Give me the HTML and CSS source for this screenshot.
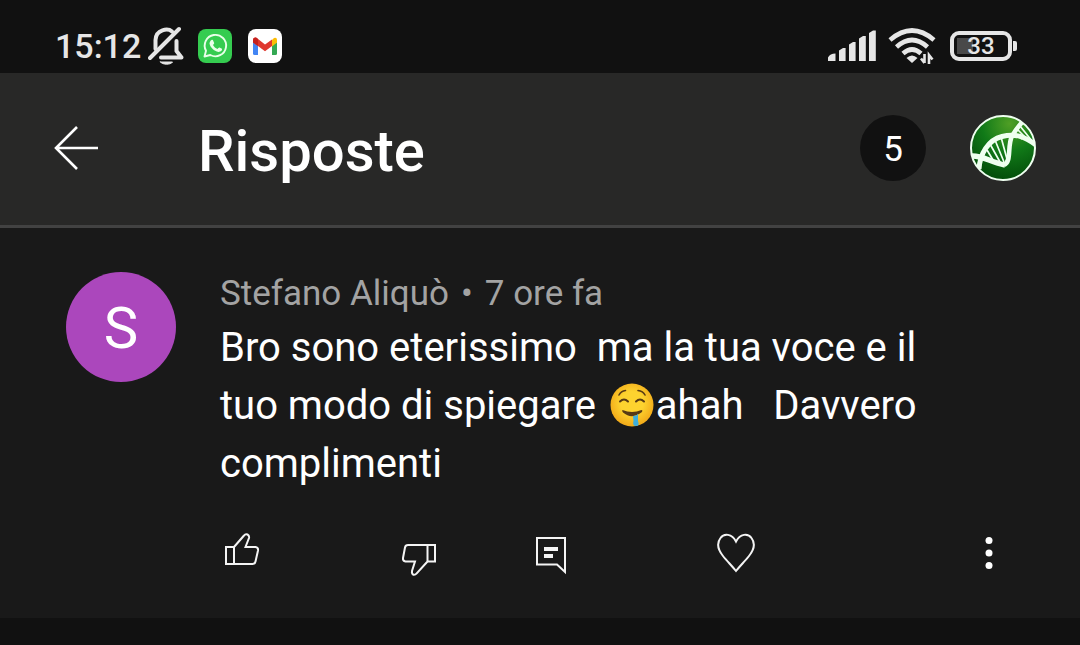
FILE: index.html
```html
<!DOCTYPE html>
<html lang="it">
<head>
  <meta charset="utf-8">
  <meta name="viewport" content="width=device-width, initial-scale=1">
  <title>Risposte</title>
  <link rel="stylesheet" href="styles.css">
</head>
<body>
  <div class="status-bar">
    <div class="status-left">
      <span class="clock">15:12</span>
      <!-- Muted bell -->
      <svg class="bell" viewBox="0 0 36 40" fill="none" stroke="#e6e6e6" stroke-width="4" stroke-linecap="round" stroke-linejoin="round">
        <path d="M24 5.500C20 2 8 3 7.500 14V23M13 31.500H33.500L28.500 25V15"/>
        <path d="M2 32L31 3"/>
        <path d="M12.500 36H24.500C23 39 14 39 12.500 36Z" fill="#e6e6e6" stroke-width="1"/>
      </svg>
      <svg class="app-icon" viewBox="0 0 34 34">
        <rect width="34" height="34" rx="8" fill="#35cc50"/>
        <path d="M6.500 27.500L8 21.700A10.700 10.700 0 1 1 12.300 26Z" fill="none" stroke="#e9ffe9" stroke-width="1.900" stroke-linejoin="round"/>
        <path d="M13.500 11C14.500 10.500 15 11 15.300 12L16.200 14C16.300 14.800 15.500 15.300 15 16C16 18 17.500 19.200 19.500 20C20.200 19.500 20.700 18.400 21.500 18.500L24 19.800C24.500 21.500 22.500 23 20.500 22.900C16 22.300 12 18 11.500 14.500C11.500 13 12.500 11.500 13.500 11Z" fill="#e9ffe9"/>
      </svg>
      <svg class="app-icon" viewBox="0 0 34 34">
        <rect width="34" height="34" rx="8" fill="#fff"/>
        <path d="M5 13L10 16.500V26H6.500Q5 26 5 24.500Z" fill="#4285f4"/>
        <path d="M24 16.500L29 13V24.500Q29 26 27.500 26H24Z" fill="#34a853"/>
        <path d="M24 11L26 9Q29 8 29 11V13.500L24 17.500Z" fill="#fbbc04"/>
        <path d="M5 13.500V11Q5 7.500 8.500 8.800L17 15.500L24 10.500V17L17 22.200L10 17Z" fill="#df382f"/>
        <path d="M5 11Q5 8 8 8.500L10 10V17L5 13.500Z" fill="#c5221f"/>
      </svg>
    </div>
    <div class="status-right">
      <svg class="signal" viewBox="0 0 48 32" fill="#e6e6e6">
        <path d="M0 31V27.500Q2 23.500 7.500 23.500V31ZM11 31V20.500L15 18H17.600V31ZM21 31V14.500L25 12H27.600V31ZM31 31V8.500L35 6H37.800V31ZM41 31V3L45 0.500H47.800V31Z"/>
      </svg>
      <svg class="wifi" viewBox="0 0 48 36" fill="none" stroke="#e6e6e6" stroke-width="4.600">
        <path d="M2 12Q24 -7 46 12M8.500 19Q24 5 39.500 19M15 25.500Q24 17.500 33 25.500"/>
        <path d="M18.500 30Q24 25 29.500 30L24 35Z" fill="#e6e6e6" stroke="none"/>
        <path d="M36.500 26V35M33 30.500L36.500 35M41 36V27L44.500 31.500" stroke-width="2.600"/>
      </svg>
      <div class="battery"><span>33</span></div>
    </div>
  </div>

  <header class="header">
    <button class="back" type="button" aria-label="Indietro">
      <svg viewBox="0 0 48 48" fill="none" stroke="#fff" stroke-width="2.600">
        <path d="M25 3L4 24L25 45M4 24H46"/>
      </svg>
    </button>
    <h1>Risposte</h1>
    <span class="count">5</span>
    <button class="channel" type="button" aria-label="Canale">
      <svg viewBox="0 0 66 66">
        <defs>
          <radialGradient id="green" cx="60%" cy="12%" r="85%">
            <stop offset="0" stop-color="#4f9f25"/>
            <stop offset="0.500" stop-color="#117a18"/>
            <stop offset="1" stop-color="#04500b"/>
          </radialGradient>
          <clipPath id="disc"><circle cx="33" cy="33" r="32"/></clipPath>
        </defs>
        <circle cx="33" cy="33" r="32" fill="url(#green)"/>
        <g clip-path="url(#disc)" fill="none" stroke="#effff0">
          <path d="M1 41C12 40 20 47 35 50" stroke-width="5.500"/>
          <path d="M9 54C10 39 18 25 32 21.500C46 18 55 22 66 30" stroke-width="5"/>
          <path d="M34 50C42 47 37 31 42 21Q46 14 54 5" stroke-width="4.500"/>
          <path d="M17 35L23 45M20 29L30 47M25 25L34 47M31 22L37 44M44 18L52 24M47 14L57 24M50 11L62 26M55 7L64 21" stroke-width="1.700"/>
        </g>
        <circle cx="33" cy="33" r="32" fill="none" stroke="#effff0" stroke-width="2"/>
      </svg>
    </button>
  </header>

  <main class="comment">
    <div class="avatar">S</div>
    <div class="content">
      <div class="meta">Stefano Aliquò<span class="dot">•</span>7 ore fa</div>
      <p class="text">Bro sono eterissimo&nbsp; ma la tua voce e il tuo modo di spiegare <svg class="emoji" viewBox="0 0 44 44" role="img" aria-label="Faccina che sbava">
          <defs>
            <radialGradient id="face" cx="50%" cy="45%" r="52%">
              <stop offset="0.500" stop-color="#fdd32f"/>
              <stop offset="1" stop-color="#f3ad1b"/>
            </radialGradient>
          </defs>
          <circle cx="22" cy="22" r="21.500" fill="url(#face)"/>
          <g fill="none" stroke="#583a14" stroke-width="2" stroke-linecap="round">
            <path d="M9 12Q11 8 15.500 7.500M28 7.500Q33 8 35 12" stroke-width="1.600"/>
            <path d="M10 18.500Q14 14.500 18 18.500M26 18.500Q30 14.500 34 18.500"/>
          </g>
          <path d="M12.500 27Q22 31 31.500 27Q33 27 32 29Q22 37 13 29.500Q11.500 27.500 12.500 27Z" fill="#583a14"/>
          <path d="M23 33Q27 33 28 30.500V38Q30 43 26 43Q22 43 23.500 38Z" fill="#3eafdc"/>
        </svg>ahah&nbsp;&nbsp; Davvero complimenti</p>
      <div class="actions">
        <button type="button" aria-label="Mi piace">
          <svg viewBox="0 0 40 48">
            <path d="M6 17H14V34H6ZM14 17L24 5.500Q25.500 3.500 27.500 4.500Q29.500 5.500 29 8L25.500 17H35.500Q38.500 17.500 38 20.500L35.500 31.500Q35 34 32.500 34H14"/>
          </svg>
        </button>
        <button type="button" aria-label="Non mi piace">
          <svg viewBox="0 0 40 48">
            <path d="M35 15H27.500V31.500H35ZM27.500 15H8Q5.500 15 5 17.500L3 28Q2.500 31 5.500 31.500H15L12 41Q11.500 44 13.500 44.800Q15.500 45 16.500 43.500L27.500 31.500"/>
          </svg>
        </button>
        <button type="button" aria-label="Rispondi">
          <svg viewBox="0 0 40 48">
            <path d="M5 8H33V42L25 34.500H5Z"/>
            <path d="M12 19H26M12 26H21" stroke-width="4"/>
          </svg>
        </button>
        <button type="button" aria-label="Cuore">
          <svg viewBox="0 0 40 48">
            <path d="M20 11.500C16 3.500 8 3 4.500 8C0 14 3 21 7 26C11 31 16 36 20 41C24 36 29 31 33 26C37 21 40 14 35.500 8C32 3 24 3.500 20 11.500Z"/>
          </svg>
        </button>
        <button type="button" aria-label="Altro">
          <svg class="dots" viewBox="0 0 40 48">
            <circle cx="21" cy="10.500" r="3.500"/>
            <circle cx="21" cy="23" r="3.500"/>
            <circle cx="21" cy="35.500" r="3.500"/>
          </svg>
        </button>
      </div>
    </div>
  </main>
</body>
</html>
```

FILE: styles.css
```css
:root {
  --bg-dark: #111111;
  --bg-header: #282827;
  --bg-comment: #191919;
  --line: #424242;
  --text: #ffffff;
  --text-muted: #a3a3a3;
  --status: #e6e6e6;
}

* {
  box-sizing: border-box;
}

body {
  margin: 0;
  background: var(--bg-dark);
  color: var(--text);
  font-family: Roboto, "Liberation Sans", sans-serif;
}

svg {
  display: block;
}

button {
  padding: 0;
  border: 0;
  background: none;
  color: inherit;
  cursor: pointer;
}

/* Status bar */
.status-bar {
  display: flex;
  justify-content: space-between;
  align-items: center;
  height: 73px;
  padding: 19px 68px 0 55px;
}

.status-left,
.status-right {
  display: flex;
  align-items: center;
}

.clock {
  color: var(--status);
  font-size: 34px;
  font-weight: 500;
}

.bell {
  width: 36px;
  height: 40px;
  margin: 0 14px 0 7px;
}

.app-icon {
  width: 34px;
  height: 34px;
  margin-right: 16px;
}

.signal {
  width: 48px;
  height: 32px;
  margin-right: 12px;
}

.wifi {
  width: 48px;
  height: 36px;
  margin-right: 14px;
}

.battery {
  position: relative;
  width: 62px;
  height: 30px;
  border: 4px solid var(--status);
  border-radius: 9px;
  background: linear-gradient(#494949, #494949) 3px 3px / 16px 16px no-repeat;
  color: var(--status);
  font-size: 24px;
  font-weight: 500;
  line-height: 23px;
  text-align: center;
}

.battery::after {
  content: "";
  position: absolute;
  top: 6px;
  right: -9px;
  width: 4px;
  height: 10px;
  border-radius: 0 2px 2px 0;
  background: var(--status);
}

/* Header */
.header {
  display: flex;
  align-items: center;
  height: 155px;
  padding: 0 44px 2px 52px;
  border-bottom: 3px solid var(--line);
  background: var(--bg-header);
}

.back svg {
  width: 48px;
  height: 48px;
}

.header h1 {
  flex: 1;
  margin: 0 0 0 98px;
  padding-top: 6px;
  font-size: 58px;
  font-weight: 500;
  line-height: 72px;
}

.count {
  width: 66px;
  height: 66px;
  margin-right: 44px;
  border-radius: 50%;
  background: var(--bg-dark);
  font-size: 35px;
  line-height: 70px;
  text-align: center;
}

.channel svg {
  width: 66px;
  height: 66px;
}

/* Comment */
.comment {
  display: flex;
  gap: 44px;
  padding: 40px 72px 40px 66px;
  background: var(--bg-comment);
}

.avatar {
  flex: none;
  width: 110px;
  height: 110px;
  margin-top: 4px;
  border-radius: 50%;
  background: #ab47bc;
  font-size: 58px;
  line-height: 112px;
  text-align: center;
}

.content {
  flex: 1;
}

.meta {
  color: var(--text-muted);
  font-size: 35px;
  line-height: 51px;
}

.meta .dot {
  margin: 0 12px;
}

.text {
  margin: 0 0 37px;
  padding-right: 68px;
  font-size: 40px;
  line-height: 58px;
}

.emoji {
  display: inline-block;
  width: 44px;
  height: 44px;
  margin: 0 2px 0 4px;
  vertical-align: -8px;
}

.actions {
  display: grid;
  grid-template-columns: 180fr 132fr 184fr 252fr 40px;
}

.actions button {
  justify-self: start;
}

.actions svg {
  width: 40px;
  height: 48px;
  fill: none;
  stroke: #f4f4f4;
  stroke-width: 2;
}

.actions .dots {
  fill: #ffffff;
  stroke: none;
}
```
